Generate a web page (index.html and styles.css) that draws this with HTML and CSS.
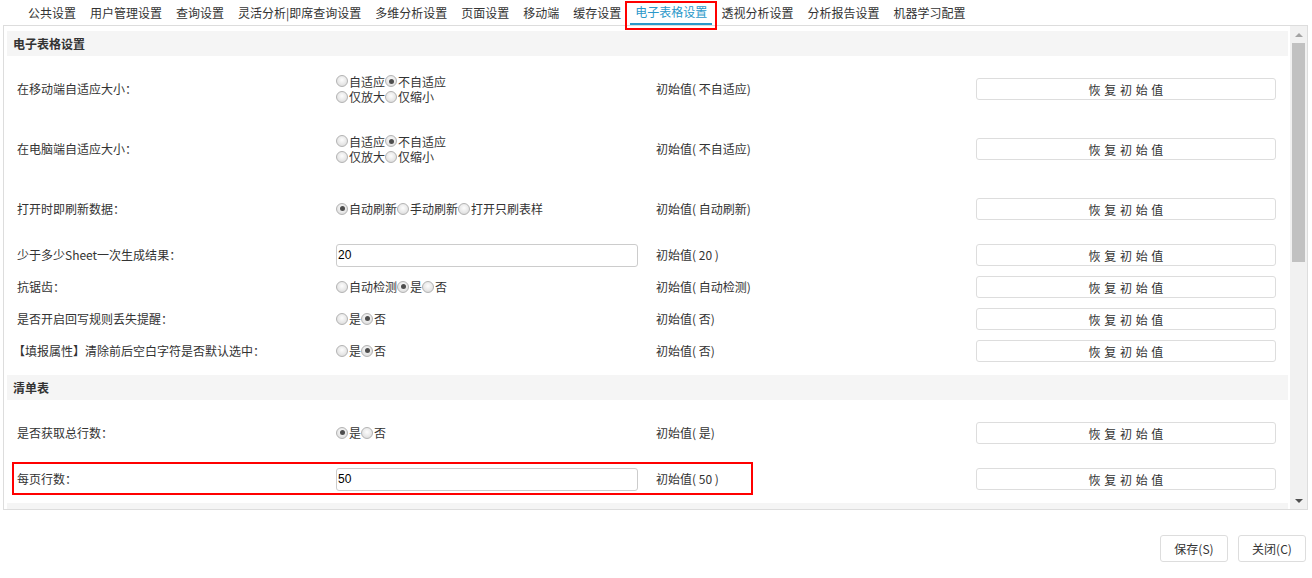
FILE: index.html
```html
<!DOCTYPE html>
<html lang="zh-CN">
  <head>
    <meta charset="UTF-8" />
    <meta name="viewport" content="width=device-width, initial-scale=1.0" />
    <title>电子表格设置</title>
    <link rel="stylesheet" href="styles.css">
  </head>

  <body>
    <ul class="tabs">
      <li>公共设置</li>
      <li>用户管理设置</li>
      <li>查询设置</li>
      <li>灵活分析|即席查询设置</li>
      <li>多维分析设置</li>
      <li>页面设置</li>
      <li>移动端</li>
      <li>缓存设置</li>
      <li class="active">电子表格设置<span class="mark tab-mark"></span></li>
      <li>透视分析设置</li>
      <li>分析报告设置</li>
      <li>机器学习配置</li>
    </ul>

    <div class="panel">
      <div class="content">
        <div class="group-title first">电子表格设置</div>

        <div class="row sp-first">
          <div class="label">在移动端自适应大小：</div>
          <div class="opts">
            <label><input type="radio" name="m1">自适应</label><label><input type="radio" name="m1" checked>不自适应</label><br>
            <label><input type="radio" name="m1">仅放大</label><label><input type="radio" name="m1">仅缩小</label>
          </div>
          <div class="init">初始值( 不自适应)</div>
          <div><button class="reset">恢 复 初 始 值</button></div>
        </div>

        <div class="row sp-l">
          <div class="label">在电脑端自适应大小：</div>
          <div class="opts">
            <label><input type="radio" name="m2">自适应</label><label><input type="radio" name="m2" checked>不自适应</label><br>
            <label><input type="radio" name="m2">仅放大</label><label><input type="radio" name="m2">仅缩小</label>
          </div>
          <div class="init">初始值( 不自适应)</div>
          <div><button class="reset">恢 复 初 始 值</button></div>
        </div>

        <div class="row sp-l">
          <div class="label">打开时即刷新数据：</div>
          <div class="opts">
            <label><input type="radio" name="m3" checked>自动刷新</label><label><input type="radio" name="m3">手动刷新</label><label><input type="radio" name="m3">打开只刷表样</label>
          </div>
          <div class="init">初始值( 自动刷新)</div>
          <div><button class="reset">恢 复 初 始 值</button></div>
        </div>

        <div class="row sp-m">
          <div class="label">少于多少Sheet一次生成结果：</div>
          <div><input class="field" type="text" value="20"></div>
          <div class="init">初始值( 20 )</div>
          <div><button class="reset">恢 复 初 始 值</button></div>
        </div>

        <div class="row">
          <div class="label">抗锯齿：</div>
          <div class="opts">
            <label><input type="radio" name="m5">自动检测</label><label><input type="radio" name="m5" checked>是</label><label><input type="radio" name="m5">否</label>
          </div>
          <div class="init">初始值( 自动检测)</div>
          <div><button class="reset">恢 复 初 始 值</button></div>
        </div>

        <div class="row">
          <div class="label">是否开启回写规则丢失提醒：</div>
          <div class="opts">
            <label><input type="radio" name="m6">是</label><label><input type="radio" name="m6" checked>否</label>
          </div>
          <div class="init">初始值( 否)</div>
          <div><button class="reset">恢 复 初 始 值</button></div>
        </div>

        <div class="row">
          <div class="label bracket">【填报属性】清除前后空白字符是否默认选中：</div>
          <div class="opts">
            <label><input type="radio" name="m7">是</label><label><input type="radio" name="m7" checked>否</label>
          </div>
          <div class="init">初始值( 否)</div>
          <div><button class="reset">恢 复 初 始 值</button></div>
        </div>

        <div class="group-title">清单表</div>

        <div class="row sp-first">
          <div class="label">是否获取总行数：</div>
          <div class="opts">
            <label><input type="radio" name="m8" checked>是</label><label><input type="radio" name="m8">否</label>
          </div>
          <div class="init">初始值( 是)</div>
          <div><button class="reset">恢 复 初 始 值</button></div>
        </div>

        <div class="row sp-m">
          <span class="mark row-mark"></span>
          <div class="label">每页行数：</div>
          <div><input class="field" type="text" value="50"></div>
          <div class="init">初始值( 50 )</div>
          <div><button class="reset">恢 复 初 始 值</button></div>
        </div>

        <div class="group-title"></div>
      </div>

      <div class="scrollbar">
        <div class="sb-btn up"></div>
        <div class="sb-track"><div class="sb-thumb"></div></div>
        <div class="sb-btn down"></div>
      </div>
    </div>

    <div class="footer">
      <button class="btn">保存(S)</button>
      <button class="btn">关闭(C)</button>
    </div>
  </body>
</html>
```

FILE: styles.css
```css
*{
  padding: 0;
  margin: 0;
  box-sizing: border-box;
}
body {
  font-family: "Noto Sans CJK SC", "Noto Sans", sans-serif;
  font-size: 12px;
  color: #333;
  background: #fff;
}
ul {
  list-style: none;
}

/* tab bar */
.tabs {
  display: flex;
  gap: 4px;
  height: 25px;
  padding-left: 23px;
}
.tabs li {
  position: relative;
  padding: 0 5px;
  line-height: 25px;
  height: 25px;
  white-space: nowrap;
}
.tabs li.active {
  color: #2b98c9;
  border-bottom: 2px solid #2b98c9;
  line-height: 24px;
}
.mark {
  position: absolute;
  border: 2px solid #f00;
}
.tab-mark {
  left: -5px;
  top: 1px;
  width: 92px;
  height: 29px;
  z-index: 2;
}

/* panel */
.panel {
  display: flex;
  margin-left: 3px;
  width: 1305px;
  height: 485px;
  border: 1px solid #ddd;
}
.content {
  flex: 1;
  overflow: hidden;
  padding: 5px 2px 0 3px;
}
.group-title {
  height: 25px;
  line-height: 25px;
  padding-left: 6px;
  background: #f5f5f5;
  font-weight: bold;
  margin-top: 8px;
}
.group-title.first {
  margin-top: 0;
}
.row {
  position: relative;
  display: grid;
  grid-template-columns: 319px 320px 320px 300px;
  align-items: center;
  height: 32px;
  padding-left: 10px;
}
.row.sp-first { margin-top: 17px; }
.row.sp-l { margin-top: 28px; }
.row.sp-m { margin-top: 14px; }
.label, .init {
  margin-top: -2px;
}
.label.bracket {
  margin-left: -4px;
}
.opts {
  line-height: 15px;
  white-space: nowrap;
}
.opts label {
  display: inline-flex;
  align-items: center;
}
.opts input[type="radio"] {
  appearance: none;
  -webkit-appearance: none;
  width: 12px;
  height: 12px;
  margin: 0 1px 0 0;
  border: 1px solid #b3b3b3;
  border-radius: 50%;
  background: radial-gradient(circle at 50% 40%, #fdfdfd 0%, #e6e6e6 60%, #d2d2d2 100%);
  position: relative;
}
.opts input[type="radio"]:checked::after {
  content: "";
  position: absolute;
  left: 2.5px;
  top: 2.5px;
  width: 5px;
  height: 5px;
  border-radius: 50%;
  background: #4d4d4d;
}
.field {
  width: 302px;
  height: 23px;
  border: 1px solid #ccc;
  border-radius: 3px;
  padding-left: 1px;
  font-family: "Liberation Sans", sans-serif;
  font-size: 12px;
  color: #000;
  outline: none;
}
.init {
  white-space: nowrap;
}
.reset {
  width: 300px;
  height: 22px;
  background: #fff;
  border: 1px solid #ddd;
  border-radius: 3px;
  font-family: inherit;
  font-size: 12px;
  color: #333;
  word-spacing: 1px;
}
.row-mark {
  left: 5px;
  top: -1px;
  width: 741px;
  height: 33px;
}

/* fake scrollbar */
.scrollbar {
  width: 17px;
  display: flex;
  flex-direction: column;
  background: #f1f1f1;
}
.sb-btn {
  height: 17px;
  display: flex;
  justify-content: center;
  align-items: center;
}
.sb-btn::before {
  content: "";
  border-left: 4px solid transparent;
  border-right: 4px solid transparent;
}
.sb-btn.up::before {
  border-bottom: 4px solid #a3a3a3;
}
.sb-btn.down::before {
  border-top: 4px solid #505050;
}
.sb-track {
  flex: 1;
  padding: 0 2px;
}
.sb-thumb {
  height: 219px;
  background: #c1c1c1;
}

/* footer */
.footer {
  display: flex;
  justify-content: flex-end;
  gap: 10px;
  margin-top: 25px;
  padding-right: 6px;
}
.btn {
  width: 68px;
  height: 27px;
  background: #fff;
  border: 1px solid #ddd;
  border-radius: 3px;
  font-family: inherit;
  font-size: 12px;
  color: #333;
}
```
